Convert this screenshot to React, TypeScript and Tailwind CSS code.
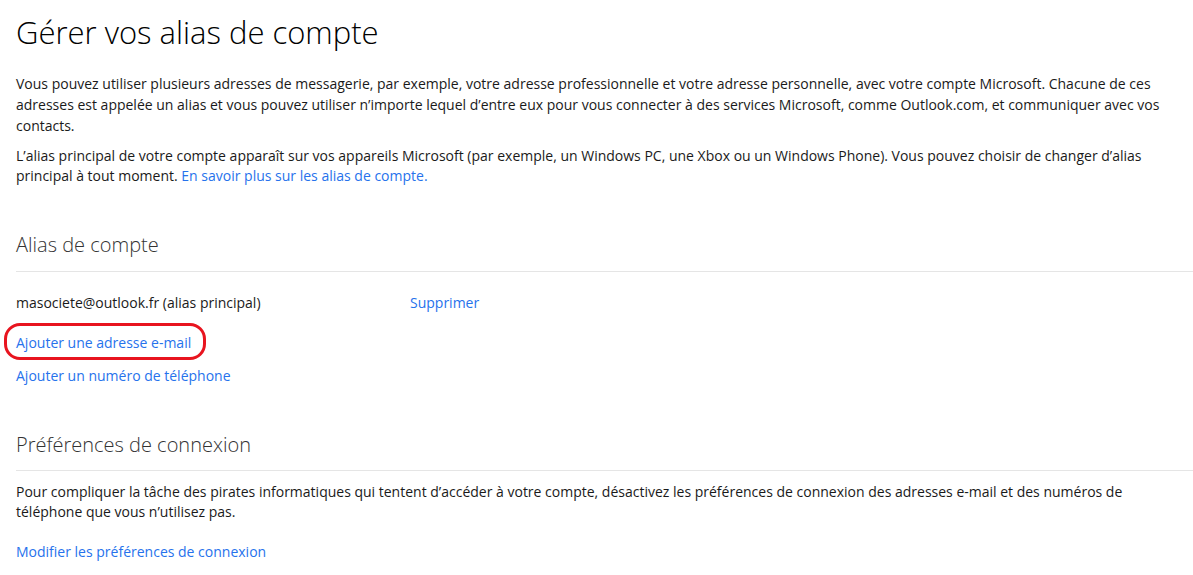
const font = { fontFamily: '"Open Sans", "Noto Sans", sans-serif' };

const Link = ({ children }: { children: React.ReactNode }) => (
  <a href="#" className="text-[#2672ec] hover:underline">
    {children}
  </a>
);

export default function App() {
  return (
    <div className="min-h-screen bg-white pl-4 text-[14px] leading-[21px] text-[#1a1a1a]" style={font}>
      <h1 className="pt-[11px] text-[31px] leading-[42px] font-light text-black">Gérer vos alias de compte</h1>

      <p className="mt-[20px] pr-4">
        Vous pouvez utiliser plusieurs adresses de messagerie, par exemple, votre adresse professionnelle et votre adresse personnelle, avec votre compte Microsoft. Chacune de ces adresses est appelée un alias et vous pouvez utiliser n’importe lequel d’entre eux pour vous connecter à des services Microsoft, comme Outlook.com, et communiquer avec vos contacts.
      </p>
      <p className="mt-[10px] pr-4 leading-[20px]">
        L’alias principal de votre compte apparaît sur vos appareils Microsoft (par exemple, un Windows PC, une Xbox ou un Windows Phone). Vous pouvez choisir de changer d’alias principal à tout moment. <Link>En savoir plus sur les alias de compte.</Link>
      </p>

      <h2 className="mt-[45px] text-[20px] leading-[28px] font-light text-[#333]">Alias de compte</h2>
      <div className="mt-[12px] border-t border-[#e5e5e5]" />

      <div className="mt-[20px] flex">
        <span className="w-[394px]">masociete@outlook.fr (alias principal)</span>
        <Link>Supprimer</Link>
      </div>
      <div className="mt-[19px] flex flex-col gap-[12px]">
        <div className="relative w-fit">
          <Link>Ajouter une adresse e-mail</Link>
          <span className="pointer-events-none absolute -left-[12px] -right-[15px] -top-[9px] -bottom-[7px] rounded-[16px] border-[3px] border-[#e8141f]" />
        </div>
        <Link>Ajouter un numéro de téléphone</Link>
      </div>

      <h2 className="mt-[45px] text-[20px] leading-[28px] font-light text-[#333]">Préférences de connexion</h2>
      <div className="mt-[11px] border-t border-[#e5e5e5]" />
      <p className="mt-[11px] pr-4 leading-[20px]">
        Pour compliquer la tâche des pirates informatiques qui tentent d’accéder à votre compte, désactivez les préférences de connexion des adresses e-mail et des numéros de téléphone que vous n’utilisez pas.
      </p>
      <div className="mt-[19px]">
        <Link>Modifier les préférences de connexion</Link>
      </div>
    </div>
  );
}
